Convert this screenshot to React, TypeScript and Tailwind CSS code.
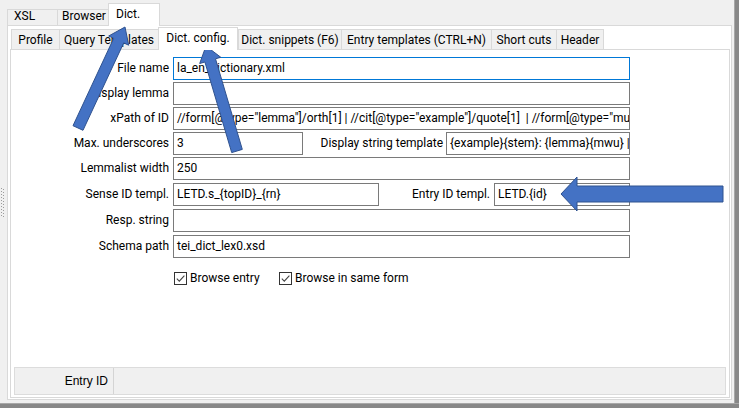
import React from "react";

function Field({
  w,
  value,
  focused,
}: {
  w: string;
  value: string;
  focused?: boolean;
}) {
  return (
    <div
      className={`h-[23px] shrink-0 overflow-hidden whitespace-pre border bg-white pl-[3px] pr-[2px] leading-[21px] ${w} ${
        focused ? "border-[#0078d7]" : "border-[#7a7a7a]"
      }`}
    >
      {value}
    </div>
  );
}

function Label({ children }: { children?: React.ReactNode }) {
  return (
    <div className="w-[162px] shrink-0 whitespace-nowrap pr-[4px] text-right leading-[23px]">
      {children}
    </div>
  );
}

function Check({ label }: { label: string }) {
  return (
    <div className="flex h-[13px] items-center">
      <div className="h-[13px] w-[13px] shrink-0 border border-[#333333] bg-white">
        <svg width="11" height="11" viewBox="0 0 11 11">
          <path d="M1.8 5.6 L4.3 8.1 L9.4 2.6" fill="none" stroke="#444444" strokeWidth="1.1" />
        </svg>
      </div>
      <span className="ml-[3px] whitespace-nowrap leading-[13px]">{label}</span>
    </div>
  );
}

export default function App() {
  const dots = Array.from({ length: 10 });
  return (
    <div className="relative h-[408px] w-[739px] overflow-hidden bg-[#f0f0f0] font-['Roboto',sans-serif] text-[12px] text-black">
      <div className="flex h-[403px]">
        {/* left grip */}
        <div className="w-[7px] shrink-0 pl-[1px] pt-[188px]">
          <svg width="4" height="30" viewBox="0 0 4 30">
            {dots.map((_, i) => (
              <rect key={"a" + i} x="0" y={i * 3} width="1" height="1" fill="#9c9c9c" />
            ))}
            {dots.map((_, i) => (
              <rect key={"b" + i} x="2" y={i * 3 + 1} width="1" height="1" fill="#9c9c9c" />
            ))}
          </svg>
        </div>

        {/* main column */}
        <div className="flex w-[725px] shrink-0 flex-col">
          {/* top tabs */}
          <div className="flex h-[25px] items-end">
            <div className="h-[16px] w-[50px] border-l border-t border-[#d9d9d9] pl-[6px] leading-[12px]">
              XSL
            </div>
            <div className="h-[16px] w-[51px] border-l border-t border-[#d9d9d9] pl-[4px] leading-[12px]">
              Browser
            </div>
            <div className="relative z-10 -mb-px h-[23px] w-[52px] border-x border-t border-[#d9d9d9] bg-white pl-[7px] leading-[20px]">
              Dict.
            </div>
          </div>

          {/* outer pane */}
          <div className="flex h-[375px] flex-col border border-[#d9d9d9] bg-white">
            {/* inner tab strip */}
            <div className="ml-[3px] flex h-[23px] items-end">
              <div className="h-[20px] w-[48px] border-l border-t border-[#d9d9d9] bg-[#f0f0f0] text-center leading-[20px]">
                Profile
              </div>
              <div className="h-[20px] w-[99px] border-l border-t border-[#d9d9d9] bg-[#f0f0f0] text-center leading-[20px]">
                Query Templates
              </div>
              <div className="relative z-10 -mb-px h-[23px] w-[80px] border-x border-t border-[#d9d9d9] bg-white text-center leading-[20px]">
                Dict. config.
              </div>
              <div className="h-[20px] w-[103px] border-l border-t border-[#d9d9d9] bg-[#f0f0f0] text-center leading-[20px]">
                Dict. snippets (F6)
              </div>
              <div className="h-[20px] w-[150px] border-l border-t border-[#d9d9d9] bg-[#f0f0f0] text-center leading-[20px]">
                Entry templates (CTRL+N)
              </div>
              <div className="h-[20px] w-[65px] border-l border-t border-[#d9d9d9] bg-[#f0f0f0] text-center leading-[20px]">
                Short cuts
              </div>
              <div className="h-[20px] w-[48px] border-x border-t border-[#d9d9d9] bg-[#f0f0f0] text-center leading-[20px]">
                Header
              </div>
            </div>

            {/* inner pane */}
            <div className="ml-[2px] flex h-[349px] w-[720px] flex-col border border-[#d9d9d9] bg-white">
              <div className="flex flex-col pt-[7px]">
                <div className="flex h-[23px]">
                  <Label>File name</Label>
                  <Field w="w-[457px]" value="la_en_dictionary.xml" focused />
                </div>
                <div className="mt-[2px] flex h-[23px]">
                  <Label>Display lemma</Label>
                  <Field w="w-[457px]" value="" />
                </div>
                <div className="mt-[2px] flex h-[23px]">
                  <Label>xPath of ID</Label>
                  <Field
                    w="w-[457px]"
                    value={'//form[@type="lemma"]/orth[1] | //cit[@type="example"]/quote[1]  | //form[@type="multiWordUnit"]/orth[1]'}
                  />
                </div>
                <div className="mt-[2px] flex h-[23px]">
                  <Label>Max. underscores</Label>
                  <div className="flex w-[457px]">
                    <Field w="w-[130px]" value="3" />
                    <div className="flex-1 whitespace-nowrap pr-[3px] text-right leading-[23px]">
                      Display string template
                    </div>
                    <Field w="w-[184px]" value="{example}{stem}: {lemma}{mwu} | {sense}" />
                  </div>
                </div>
                <div className="mt-[2px] flex h-[23px]">
                  <Label>Lemmalist width</Label>
                  <Field w="w-[457px]" value="250" />
                </div>
                <div className="mt-[3px] flex h-[23px]">
                  <Label>Sense ID templ.</Label>
                  <div className="flex w-[457px]">
                    <Field w="w-[206px]" value="LETD.s_{topID}_{rn}" />
                    <div className="flex-1 whitespace-nowrap pr-[4px] text-right leading-[23px]">
                      Entry ID templ.
                    </div>
                    <Field w="w-[136px]" value="LETD.{id}" />
                  </div>
                </div>
                <div className="mt-[3px] flex h-[23px]">
                  <Label>Resp. string</Label>
                  <Field w="w-[457px]" value="" />
                </div>
                <div className="mt-[3px] flex h-[23px]">
                  <Label>Schema path</Label>
                  <Field w="w-[457px]" value="tei_dict_lex0.xsd" />
                </div>
                <div className="ml-[163px] mt-[14px] flex">
                  <div className="w-[105px]">
                    <Check label="Browse entry" />
                  </div>
                  <Check label="Browse in same form" />
                </div>
              </div>

              {/* status bar */}
              <div className="mx-[3px] mb-[2px] mt-auto flex h-[28px] border border-[#dcdcdc] bg-[#f0f0f0]">
                <div className="w-[99px] border-r border-[#d4d4d4] pr-[5px] text-right font-['Liberation_Sans',sans-serif] leading-[26px]">
                  Entry ID
                </div>
              </div>
            </div>
          </div>
        </div>

        <div className="w-[2px] shrink-0" />
        <div className="w-[5px] shrink-0 border-l border-[#a8a8a8] bg-[#888888]" />
      </div>
      <div className="h-[5px] border-t border-[#a8a8a8] bg-[#888888]" />

      {/* annotation arrows */}
      <svg
        className="pointer-events-none absolute left-0 top-0"
        width="739"
        height="408"
        viewBox="0 0 739 408"
      >
        <polygon
          points="83,130.3 123.7,42.9 128.7,45.2 125,27 108.7,36 113.7,38.3 73,125.7"
          fill="#4472c4"
          stroke="#2f528f"
          strokeWidth="1"
        />
        <polygon
          points="242.3,149.4 215.5,58.8 220.8,57.3 206,46 199.7,63.5 204.9,62 231.7,152.6"
          fill="#4472c4"
          stroke="#2f528f"
          strokeWidth="1"
        />
        <polygon
          points="723,186 577,186 577,177 561,194 577,211 577,202 723,202"
          fill="#4472c4"
          stroke="#2f528f"
          strokeWidth="1"
        />
      </svg>
    </div>
  );
}
